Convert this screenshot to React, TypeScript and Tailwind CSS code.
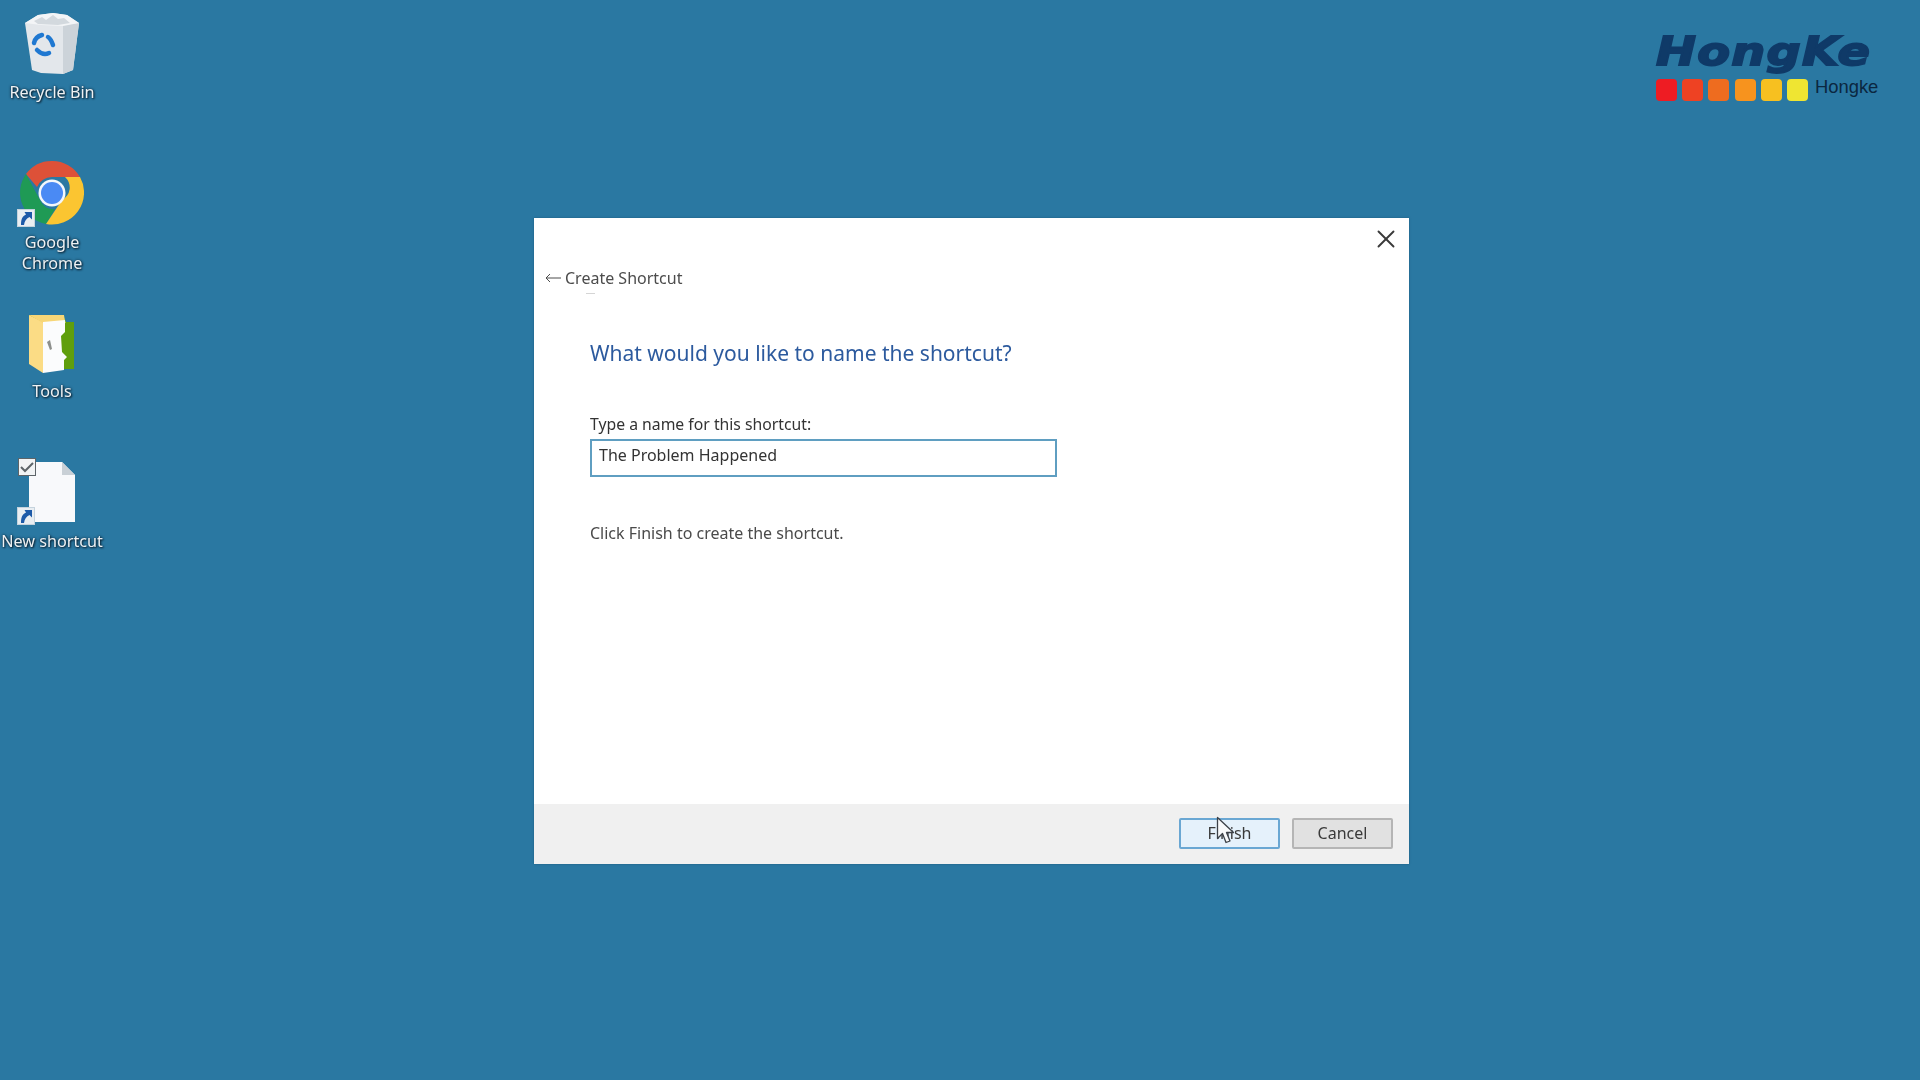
import { X } from 'lucide-react';
import type { ReactNode } from 'react';

function ShortcutBadge({ className }: { className: string }) {
  return (
    <svg viewBox="0 0 18 18" className={`absolute h-[18px] w-[18px] ${className}`}>
      <rect x="0.5" y="0.5" width="17" height="17" fill="#e9eef2" stroke="#c5d3dd" />
      <path d="M4 16c0-6 1.500-9 5-10.500L7.500 3H15v7.500l-2.500-2.500C9.500 9.500 7.500 12 7 16z" fill="#1d5aa8" />
    </svg>
  );
}

function RecycleBin() {
  return (
    <svg viewBox="0 0 56 62" className="h-[62px] w-[56px]">
      <path d="M1 11 14 3l15-2 14 2 12 8-6 47-10 4-22-1-9-3z" fill="#e3e7eb" />
      <path d="M39 13 55 11l-6 47-10 4z" fill="#ccd3d9" />
      <path d="M1 11 14 3l15-2 14 2 12 8-16 3-22-1z" fill="#f3f5f7" />
      <path d="M10 9l8-4 4 3 7-5 5 4 6-1 6 5-12 2-20-1z" fill="#d3d9de" />
      <g fill="none" stroke="#1f78d1" strokeWidth="4.500" strokeLinecap="round">
        <path d="M10 31c1-5 4-7 8-8" />
        <path d="M24 25c3 2 4 5 5 8" />
        <path d="M25 41c-4 2-8 1-12-3" />
      </g>
    </svg>
  );
}

function Chrome() {
  return (
    <svg viewBox="0 0 64 64" className="h-16 w-16">
      <path d="M32 0a32 32 0 0 1 28 16H32a16 16 0 0 0-15 10L6 13A32 32 0 0 1 32 0z" fill="#dd5138" />
      <path d="M6 13l14 26a14 14 0 0 0 15 9L26 63A32 32 0 0 1 6 13z" fill="#1f9a55" />
      <path d="M60 16a32 32 0 0 1-34 47l16-24a14 14 0 0 0 3-23z" fill="#fbc531" />
      <circle cx="32" cy="32" r="13.500" fill="#f4f7fb" />
      <circle cx="32" cy="32" r="11" fill="#4a8af4" />
    </svg>
  );
}

function Folder() {
  return (
    <svg viewBox="0 0 46 60" className="h-[60px] w-[46px]">
      <path d="M0 1h34l3 7h8v47H14z" fill="#5f9e0d" />
      <path d="M12 7 34 1l3 8-20 2z" fill="#b8cf55" />
      <path d="M0 1 14 8v51L0 50z" fill="#fbdc85" />
      <path d="M0 1h35l1 7-22 1z" fill="#f7d677" />
      <path d="M14 8 36 6v12l-4 4 1 16 5 5-3 3v10l-21 3z" fill="#fbfcfd" />
      <path d="M18 28l3-2 2 9-2 1z" fill="#8c8f8c" />
    </svg>
  );
}

function NewShortcut() {
  return (
    <svg viewBox="0 0 46 60" className="h-[60px] w-[46px]">
      <path d="M0 0h33l13 13v47H0z" fill="#f8f9fb" />
      <path d="M33 0l13 13H33z" fill="#c9d0d6" />
    </svg>
  );
}

function DesktopIcon({ top, label, children }: { top: string; label: ReactNode; children: ReactNode }) {
  return (
    <div className={`absolute left-0 flex w-[104px] flex-col items-center ${top}`}>
      <div className="relative flex h-[64px] w-[104px] items-center justify-center">{children}</div>
      <div className="mt-[7px] text-center font-['Noto_Sans',sans-serif] text-[16.200px] leading-[21px] text-[#eef1f3] [text-shadow:1px_1px_2px_#0b2233,0_0_3px_#0b2233] blur-[0.5px]">
        {label}
      </div>
    </div>
  );
}

function Logo() {
  const dots = ['bg-[#ee1c23]', 'bg-[#ee4223]', 'bg-[#ee6c1f]', 'bg-[#f7931e]', 'bg-[#f7c020]', 'bg-[#efe532]'];
  return (
    <div className="absolute left-[1656px] top-[25px] w-[240px]">
      <div className="h-[54px] origin-left scale-x-[1.225] font-['DejaVu_Sans',sans-serif] text-[39px] font-bold italic leading-[54px] tracking-[1px] text-[#0f3a68] [-webkit-text-stroke:1.800px_#0f3a68]">
        HongKe
      </div>
      <div className="flex items-center">
        <div className="flex gap-[5.200px]">
          {dots.map((c) => (
            <div key={c} className={`h-[22px] w-[21px] rounded-[4px] ${c}`} />
          ))}
        </div>
        <span className="-mt-[6px] ml-[7px] font-['Liberation_Sans',sans-serif] text-[18.400px] leading-[22px] text-[#0b2740]">Hongke</span>
      </div>
    </div>
  );
}

function Cursor() {
  return (
    <svg viewBox="0 0 18 30" className="absolute left-[1216px] top-[816px] h-[30px] w-[18px]">
      <path d="M1.500 1.500v21l5-5 3.500 9 4-1.500-3.500-8.500h7z" fill="#f8f9fa" stroke="#3c4148" strokeWidth="1.300" strokeLinejoin="round" />
    </svg>
  );
}

export default function App() {
  return (
    <div className="relative h-[1080px] w-[1920px] overflow-hidden bg-[#2a78a2]">
      <DesktopIcon top="top-[11px]" label="Recycle Bin">
        <RecycleBin />
      </DesktopIcon>
      <DesktopIcon top="top-[161px]" label={<>Google<br />Chrome</>}>
        <Chrome />
        <ShortcutBadge className="left-[17px] top-[48px]" />
      </DesktopIcon>
      <DesktopIcon top="top-[310px]" label="Tools">
        <div className="mt-[3px]">
          <Folder />
        </div>
      </DesktopIcon>
      <DesktopIcon top="top-[460px]" label="New shortcut">
        <NewShortcut />
        <div className="absolute left-[18px] top-[-2px] flex h-[18px] w-[18px] items-center justify-center border border-[#5d6468] bg-[#f2f4f5]">
          <svg viewBox="0 0 16 16" className="h-4 w-4">
            <path d="M2 8l4 4 8-8" fill="none" stroke="#5d6468" strokeWidth="2" />
          </svg>
        </div>
        <ShortcutBadge className="left-[17px] top-[47px]" />
      </DesktopIcon>

      <Logo />

      <div className="absolute left-[534px] top-[218px] flex h-[646px] w-[875px] flex-col bg-white shadow-[0_0_2px_#1c5a7d] font-['Noto_Sans',sans-serif]">
        <div className="flex h-[36px] justify-end pr-[8px] pt-[6px]">
          <X className="h-[30px] w-[30px] text-[#3a3a3a]" strokeWidth={1.500} />
        </div>
        <div className="flex h-[48px] items-center pl-[11px] blur-[0.3px]">
          <svg viewBox="0 0 16 10" className="h-[10px] w-[16px]">
            <path d="M16 5H1M5 1 1 5l4 4" fill="none" stroke="#4c4c4c" strokeWidth="1" />
          </svg>
          <span className="ml-[4px] text-[16px] leading-none text-[#4c4c4c]">Create Shortcut</span>
        </div>
        <div className="-mt-[9px] mb-[8px] ml-[52px] h-px w-[9px] bg-[#d5d5d5]" />
        <div className="flex flex-1 flex-col pl-[56px] blur-[0.3px]">
          <h1 className="mt-[35px] text-[21px] font-normal leading-[32px] text-[#2c5a9e]">What would you like to name the shortcut?</h1>
          <label className="mt-[44px] text-[15.750px] leading-[22px] text-[#333]">Type a name for this shortcut:</label>
          <div className="mt-[4px] flex h-[38px] w-[467px] border-2 border-[#5f9ec1] pl-[7px] pt-[2px] text-[16px] leading-[24px] text-[#333]">
            The Problem Happened
          </div>
          <p className="mt-[44px] text-[16px] leading-[24px] text-[#4a4a4a]">Click Finish to create the shortcut.</p>
        </div>
        <div className="flex h-[60px] items-center justify-end gap-[12px] bg-[#f0f0f0] pb-[2px] pr-[16px] text-[16px] text-[#3a3a3a]">
          <button className="h-[31px] w-[101px] rounded-[2px] border-2 border-[#6aa7d3] bg-[#e5f1fb] leading-none blur-[0.3px]">Finish</button>
          <button className="h-[31px] w-[101px] rounded-[2px] border-2 border-[#b5b5b5] bg-[#e1e1e1] leading-none blur-[0.3px]">Cancel</button>
        </div>
      </div>

      <Cursor />
    </div>
  );
}
